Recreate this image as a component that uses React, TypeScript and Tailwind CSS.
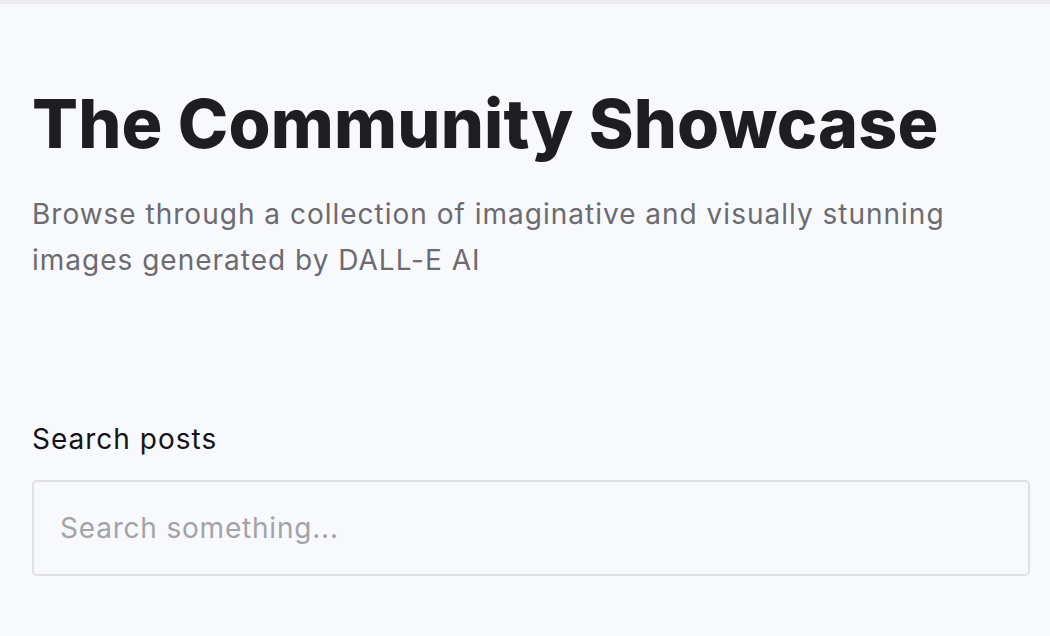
export default function App() {
  return (
    <div
      className="w-[1050px] h-[636px] overflow-hidden bg-[#f8f9fd] flex flex-col"
      style={{ fontFamily: "Inter, 'Noto Sans', sans-serif" }}
    >
      <div className="h-[4px] bg-[#ececf0] shrink-0" />
      <main className="px-[32px] pt-[79px] flex flex-col">
        <h1 className="text-[68px] leading-[80px] font-extrabold text-[#1e1e21] tracking-[0.2px]">
          The Community Showcase
        </h1>
        <p className="mt-[28px] text-[28px] leading-[46px] tracking-[1px] text-[#6b6b70] max-w-[930px]">
          Browse through a collection of imaginative and visually stunning images generated by DALL-E AI
        </p>
        <div className="mt-[138px] flex flex-col">
          <label className="text-[28px] leading-[36px] tracking-[1px] text-[#141416]">Search posts</label>
          <input
            className="mt-[23px] w-[998px] h-[96px] rounded-[5px] border-2 border-[#e0e1e5] bg-[#f8f9fc] px-[26px] text-[28px] tracking-[0.8px] text-[#222] placeholder:text-[#a3a3a8] outline-none"
            placeholder="Search something..."
          />
        </div>
      </main>
    </div>
  );
}
